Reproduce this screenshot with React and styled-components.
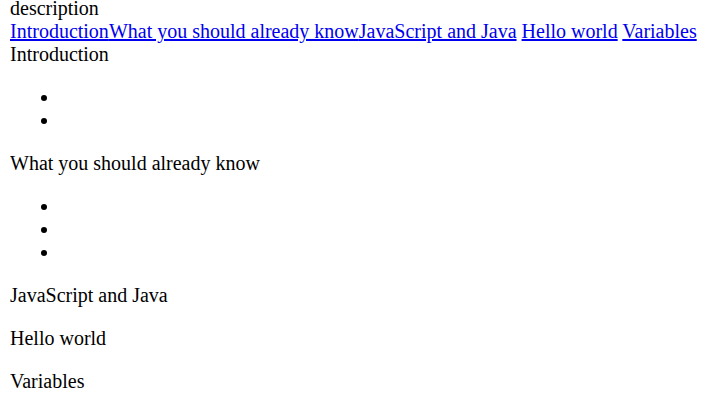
import React from 'react';
import styled, { createGlobalStyle } from 'styled-components';

const GlobalStyle = createGlobalStyle`
  body {
    margin: 0 10px;
    font-family: "Liberation Serif", "Times New Roman", serif;
    font-size: 20px;
    line-height: 23px;
    color: #000;
    background: #fff;
  }
`;

const Header = styled.header`
  margin-top: -3px;
`;

const Nav = styled.nav`
  display: block;
`;

const NavLink = styled.a`
  color: #0000ee;
  text-decoration: underline;
`;

const Section = styled.section`
  display: block;
`;

const SectionTitle = styled.header`
  display: block;
`;

const List = styled.ul`
  margin: 20px 0;
  padding-left: 50px;
`;

const Item = styled.li`
  height: 23px;
`;

const sections = [
  { id: 'intro', title: 'Introduction', items: 2 },
  { id: 'know', title: 'What you should already know', items: 3 },
  { id: 'js-java', title: 'JavaScript and Java', items: 0 },
  { id: 'hello', title: 'Hello world', items: 0 },
  { id: 'vars', title: 'Variables', items: 0 },
];

const App = () => {
  return (
    <>
      <GlobalStyle />
      <Header>description</Header>
      <Nav>
        <NavLink href="#intro">Introduction</NavLink><NavLink href="#know">What you should already know</NavLink><NavLink href="#js-java">JavaScript and Java</NavLink>{' '}
        <NavLink href="#hello">Hello world</NavLink>{' '}
        <NavLink href="#vars">Variables</NavLink>
      </Nav>
      <main>
        {sections.map((s) => (
          <Section key={s.id} id={s.id}>
            <SectionTitle>{s.title}</SectionTitle>
            <List>
              {Array.from({ length: s.items }).map((_, i) => (
                <Item key={i} />
              ))}
            </List>
          </Section>
        ))}
      </main>
    </>
  );
};

export default App;
